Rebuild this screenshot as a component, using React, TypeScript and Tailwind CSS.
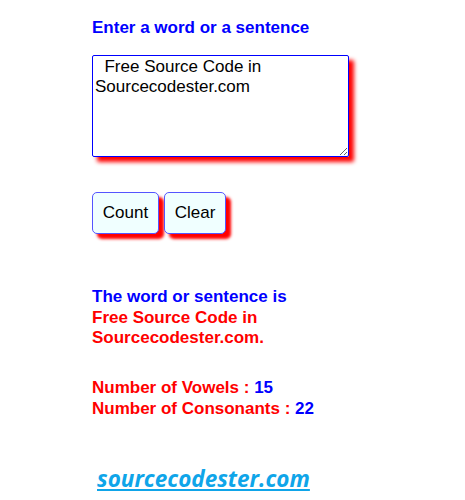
import { useState } from 'react';

const font = { fontFamily: '"Liberation Sans", Arial, sans-serif' };

export default function App() {
  const [text, setText] = useState('  Free Source Code in Sourcecodester.com');
  const [result, setResult] = useState<string | null>('Free Source Code in Sourcecodester.com.');
  const [counts, setCounts] = useState({ vowels: 15, consonants: 22 });

  const count = () => {
    const letters = text.replace(/[^a-z]/gi, '');
    const vowels = letters.replace(/[^aeiou]/gi, '').length;
    setCounts({ vowels, consonants: letters.length - vowels });
    setResult(text.trim() + '.');
  };

  return (
    <div className="min-h-screen bg-white pl-[92px] pt-[17px]" style={font}>
      <h3 className="text-[17px] font-bold leading-[21px] text-[#0000ff]">Enter a word or a sentence</h3>

      <textarea
        value={text}
        onChange={(e) => setText(e.target.value)}
        className="mt-[17px] block h-[102px] w-[257px] rounded-[2px] border border-[#0000ff] px-[2px] py-[1px] text-[17px] leading-[20px] text-black shadow-[5px_5px_4px_#ff0000] outline-none"
        style={font}
      />

      <div className="mt-[35px] flex gap-[5px]">
        <button
          onClick={count}
          className="h-[42px] w-[67px] rounded-[5px] border border-[#5555ff] bg-[#f0ffff] text-[17px] text-black shadow-[5px_5px_3px_#ff0000]"
        >
          Count
        </button>
        <button
          onClick={() => {
            setText('');
            setResult(null);
            setCounts({ vowels: 0, consonants: 0 });
          }}
          className="h-[42px] w-[62px] rounded-[5px] border border-[#5555ff] bg-[#f0ffff] text-[17px] text-black shadow-[5px_5px_3px_#ff0000]"
        >
          Clear
        </button>
      </div>

      <div className="mt-[53px] text-[17px] font-bold leading-[20.5px]">
        <div className="text-[#0000ff]">The word or sentence is</div>
        <div className="w-[210px] text-[#ff0000]">{result}</div>
      </div>

      <div className="mt-[28px] text-[17px] font-bold leading-[21px] text-[#ff0000]">
        <div>
          Number of Vowels : <span className="text-[#0000ff]">{counts.vowels}</span>
        </div>
        <div>
          Number of Consonants : <span className="text-[#0000ff]">{counts.consonants}</span>
        </div>
      </div>

      <div className="mt-[46px] pl-[5px]">
        <a
          href="#"
          className="text-[22.5px] font-bold italic leading-[28px] text-[#0fa5e9] underline"
          style={{ fontFamily: '"Open Sans", sans-serif' }}
        >
          sourcecodester.com
        </a>
      </div>
    </div>
  );
}
